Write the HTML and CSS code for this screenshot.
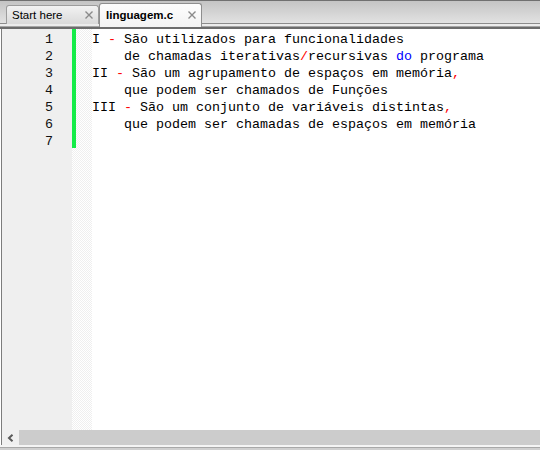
FILE: index.html
```html
<!DOCTYPE html>
<html>
<head>
<meta charset="utf-8">
<link rel="stylesheet" href="styles.css">
</head>
<body>
<div class="tabbar">
  <div class="tab">
    <span class="tab-label">Start here</span>
    <svg class="close" width="8" height="8" viewBox="0 0 8 8"><path d="M0.5 0.5L7.5 7.5M7.5 0.5L0.5 7.5" stroke="#8a8a8a" stroke-width="1.4" fill="none"/></svg>
  </div>
  <div class="tab active">
    <span class="tab-label">linguagem.c</span>
    <svg class="close" width="8" height="8" viewBox="0 0 8 8"><path d="M0.5 0.5L7.5 7.5M7.5 0.5L0.5 7.5" stroke="#8a8a8a" stroke-width="1.4" fill="none"/></svg>
  </div>
</div>
<div class="editor">
  <div class="main">
    <div class="gutter">
      <div>1</div><div>2</div><div>3</div><div>4</div><div>5</div><div>6</div><div>7</div>
    </div>
    <div class="margin"><div class="changebar"></div></div>
    <div class="code">
      <div class="line">I <span class="op">-</span> São utilizados para funcionalidades</div>
      <div class="line">    de chamadas iterativas<span class="op">/</span>recursivas <span class="kw">do</span> programa</div>
      <div class="line">II <span class="op">-</span> São um agrupamento de espaços em memória<span class="op">,</span></div>
      <div class="line">    que podem ser chamados de Funções</div>
      <div class="line">III <span class="op">-</span> São um conjunto de variáveis distintas<span class="op">,</span></div>
      <div class="line">    que podem ser chamadas de espaços em memória</div>
      <div class="line"> </div>
    </div>
  </div>
  <div class="hscroll">
    <div class="arrow">
      <svg width="8" height="8" viewBox="0 0 8 8"><path d="M5.5 0.8L2 4L5.5 7.2" stroke="#5a5a5a" stroke-width="2" fill="none"/></svg>
    </div>
    <div class="track"></div>
  </div>
</div>
<div class="bottom"></div>
</body>
</html>
```
FILE: styles.css
```css
html, body {
  margin: 0;
  padding: 0;
  background: #ffffff;
  width: 540px;
  height: 450px;
  overflow: hidden;
}

.tabbar {
  height: 29px;
  display: flex;
  align-items: flex-start;
  padding-left: 6px;
  box-sizing: border-box;
  background: linear-gradient(to bottom,
    #707070 0, #707070 1px,
    #c4c4c4 1px, #e2e2e2 23px,
    #8c8c8c 23px, #8c8c8c 24px,
    #ececec 24px, #ececec 26px,
    #a6a6a6 26px, #a6a6a6 27px,
    #6c6c6c 27px, #6c6c6c 29px);
}

.tab {
  box-sizing: border-box;
  width: 93px;
  height: 19px;
  margin-top: 5px;
  border: 1px solid #9c9c9c;
  border-bottom: none;
  border-radius: 3px 3px 0 0;
  background: linear-gradient(to bottom, #f2f2f2, #dadada);
  display: flex;
  align-items: center;
  padding: 0 5px 0 5px;
  font-family: "Liberation Sans", Arial, sans-serif;
  font-size: 11.5px;
  color: #000;
}

.tab.active {
  width: 103px;
  height: 24px;
  margin-top: 3px;
  padding: 0 5px 2px 6px;
  border-color: #8e8e8e;
  background: linear-gradient(to bottom, #fdfdfd, #f3f3f3);
  font-weight: bold;
}

.tab-label {
  flex: 1;
  white-space: nowrap;
}

.close {
  display: block;
  flex: none;
}

.editor {
  height: 416px;
  display: flex;
  flex-direction: column;
  border-left: 1px solid #7c7c7c;
  margin-left: 1px;
}

.main {
  flex: 1;
  display: flex;
  min-height: 0;
}

.gutter {
  width: 70px;
  flex: none;
  box-sizing: border-box;
  padding-top: 2px;
  padding-right: 19px;
  background: #efefef;
  text-align: right;
  font-family: "Courier New", "Nimbus Mono PS", "FreeMono", "Liberation Mono", monospace;
  font-size: 13.333px;
  line-height: 17px;
  color: #111;
}

.margin {
  width: 20px;
  flex: none;
  background: repeating-conic-gradient(#efefef 0 25%, #ffffff 0 50%) 0 0 / 2px 2px;
}

.changebar {
  width: 4px;
  height: 119px;
  background: #14ec48;
}

.code {
  flex: 1;
  padding-top: 2px;
  font-family: "Courier New", "Nimbus Mono PS", "FreeMono", "Liberation Mono", monospace;
  font-size: 13.333px;
  line-height: 17px;
  color: #000;
}

.line {
  white-space: pre;
  height: 17px;
}

.op {
  color: #ff0000;
}

.kw {
  color: #0000ff;
}

.hscroll {
  height: 15px;
  flex: none;
  display: flex;
}

.arrow {
  width: 17px;
  flex: none;
  background: #f0f0f0;
  display: flex;
  align-items: center;
  justify-content: center;
}

.track {
  flex: 1;
  background: #cccccc;
}

.bottom {
  height: 5px;
  background: linear-gradient(to bottom,
    #f4f4f4 0, #f4f4f4 2px,
    #a8a8a8 2px, #a8a8a8 3px,
    #cfcfcf 3px, #cfcfcf 5px);
}
```
